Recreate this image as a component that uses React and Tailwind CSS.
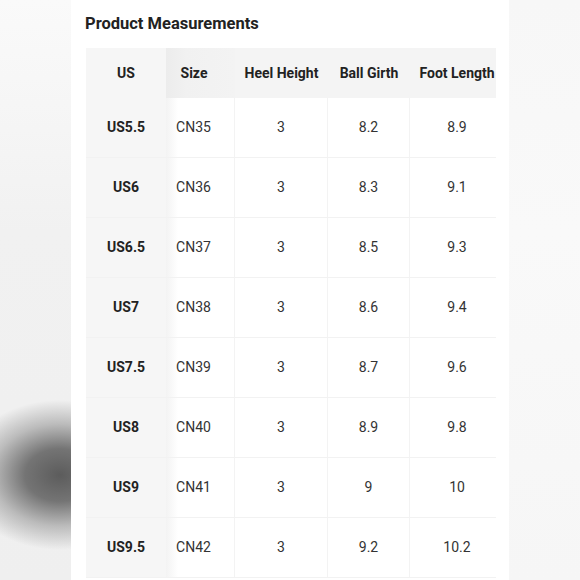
import React from "react";

const rows = [
    ["US5.5", "CN35", "3", "8.2", "8.9"],
    ["US6", "CN36", "3", "8.3", "9.1"],
    ["US6.5", "CN37", "3", "8.5", "9.3"],
    ["US7", "CN38", "3", "8.6", "9.4"],
    ["US7.5", "CN39", "3", "8.7", "9.6"],
    ["US8", "CN40", "3", "8.9", "9.8"],
    ["US9", "CN41", "3", "9", "10"],
    ["US9.5", "CN42", "3", "9.2", "10.2"],
];

export default function App() {
    return (
        <div
            className="flex h-[580px] w-[580px] overflow-hidden bg-white"
            style={{ fontFamily: "Roboto, 'Liberation Sans', sans-serif" }}
        >
            {/* blurred photo strip, left */}
            <div className="relative w-[71px] shrink-0 overflow-hidden bg-[linear-gradient(to_bottom,#fafafa,#f1f1f1_40%,#efefef)]">
                <div className="absolute left-[-40px] top-[400px] h-[150px] w-[200px] bg-[radial-gradient(closest-side,#5c5c5c,#747474_35%,rgba(170,170,170,0.75)_68%,rgba(240,240,240,0))]" />
            </div>

            <div className="w-[438px] shrink-0 bg-white pl-[14px] pt-[12px]">
                <h2 className="text-[16.5px] font-bold leading-[24px] text-[#222]">
                    Product Measurements
                </h2>

                <div className="ml-[1px] mt-[12px] w-[410px] overflow-hidden">
                    <div className="w-[504px]">
                        {/* header */}
                        <div className="flex h-[50px] items-center bg-[#f4f4f4] text-[14px] font-bold text-[#222]">
                            <div className="flex h-full w-[80px] items-center justify-center bg-[#f6f6f6]">
                                US
                            </div>
                            <div className="flex h-full w-[69px] items-center justify-center bg-[linear-gradient(to_right,#ececec,#f1f1f1_20px,#f3f3f3)] pr-[13px]">
                                Size
                            </div>
                            <div className="flex h-full w-[93px] items-center justify-center">
                                Heel Height
                            </div>
                            <div className="flex h-full w-[82px] items-center justify-center">
                                Ball Girth
                            </div>
                            <div className="flex h-full w-[94px] items-center justify-center">
                                Foot Length
                            </div>
                        </div>

                        {rows.map((r) => (
                            <div
                                key={r[0]}
                                className="flex h-[60px] items-center border-b border-[#f2f2f2] text-[14px] text-[#333]"
                            >
                                <div className="flex h-full w-[80px] items-center justify-center bg-[#f6f6f6] font-bold text-[#222]">
                                    {r[0]}
                                </div>
                                <div className="flex h-full w-[69px] items-center justify-center border-r border-[#f3f3f3] bg-[linear-gradient(to_right,#f3f3f3,#ffffff_12px)] pr-[13px]">
                                    {r[1]}
                                </div>
                                <div className="flex h-full w-[93px] items-center justify-center border-r border-[#f3f3f3]">
                                    {r[2]}
                                </div>
                                <div className="flex h-full w-[82px] items-center justify-center border-r border-[#f3f3f3]">
                                    {r[3]}
                                </div>
                                <div className="flex h-full w-[94px] items-center justify-center">
                                    {r[4]}
                                </div>
                            </div>
                        ))}
                    </div>
                </div>
            </div>

            {/* blurred photo strip, right */}
            <div className="w-[71px] shrink-0 bg-[linear-gradient(to_bottom,#f7f7f7,#f9f9f9_40%,#f6f6f6)]" />
        </div>
    );
}
